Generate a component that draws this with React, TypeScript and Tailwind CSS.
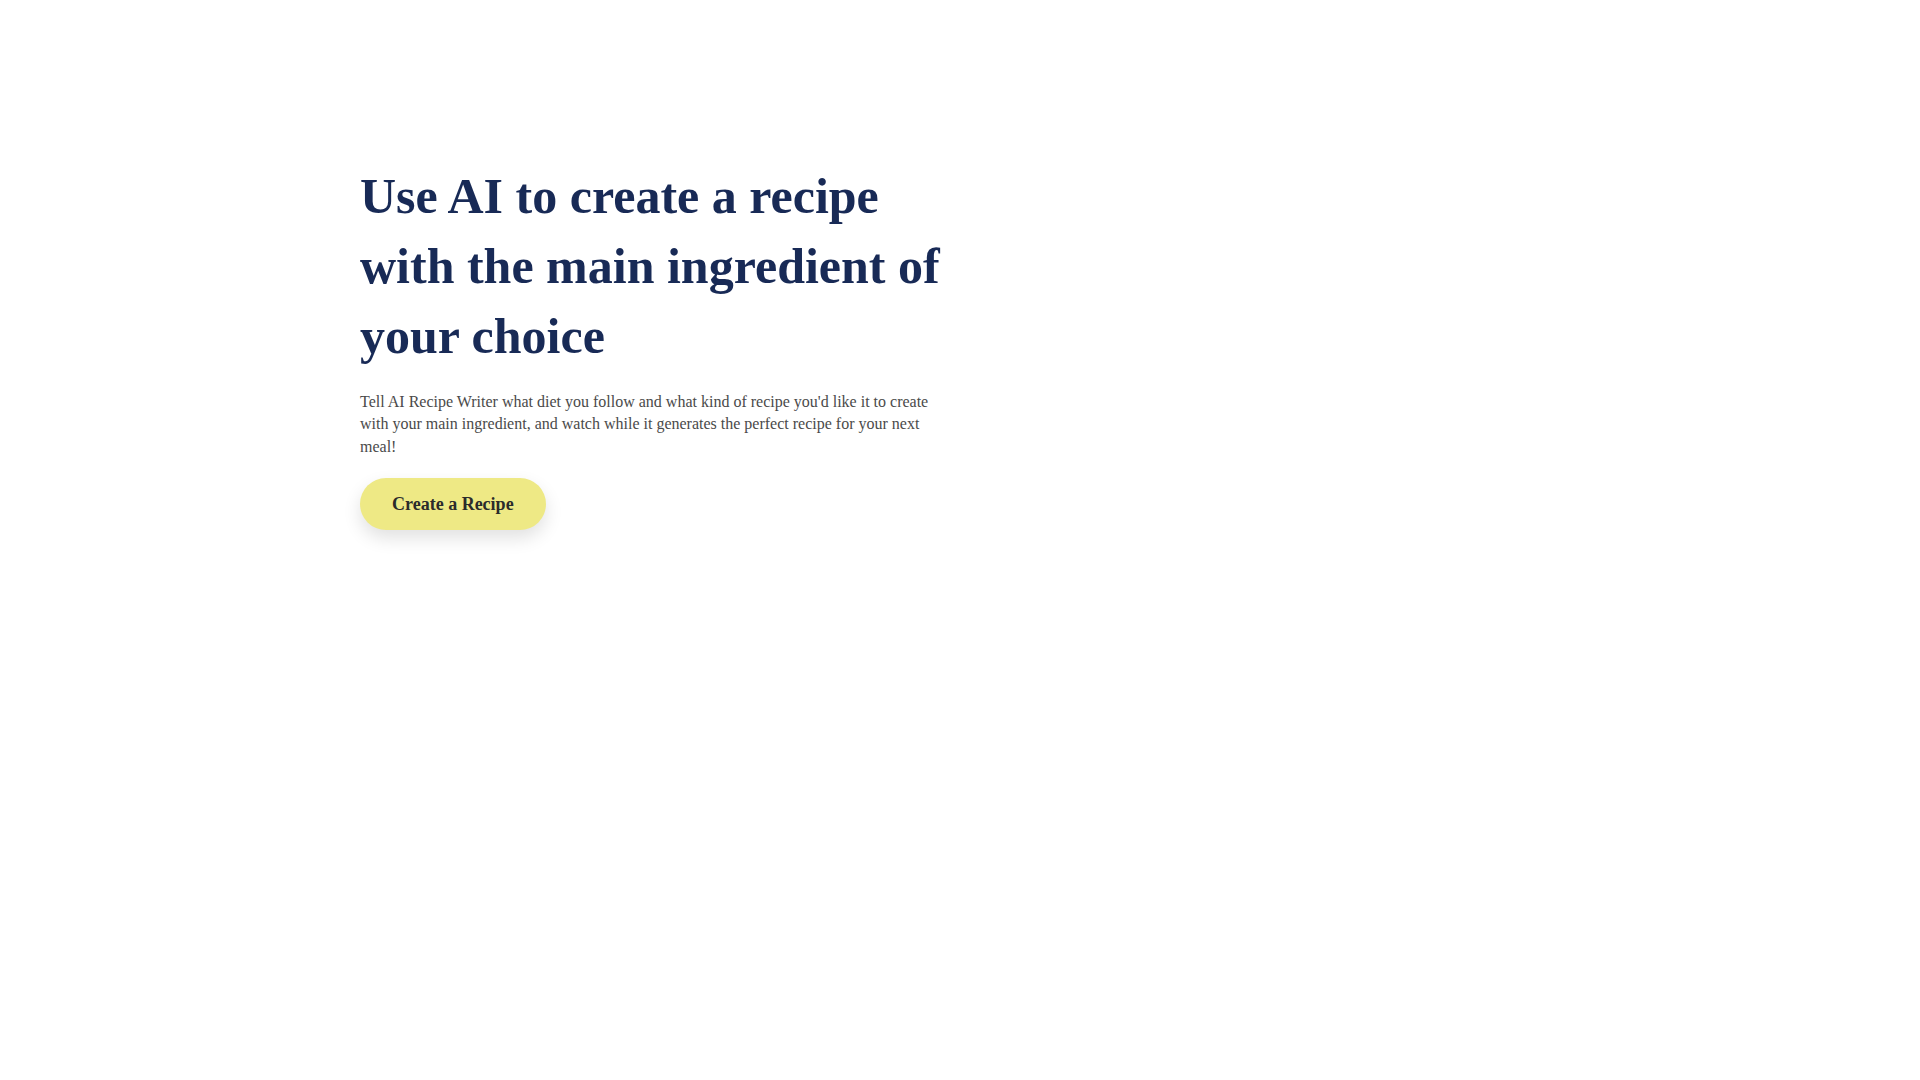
export default function App() {
    return (
        <div className="min-h-screen w-full bg-white" style={{ fontFamily: '"Liberation Serif", "Times New Roman", serif' }}>
            {/*HERO*/}
            <section className="mx-auto max-w-[1200px] pt-[161px] grid grid-cols-2 gap-8">
                <div className="flex flex-col">
                    <h1 className="text-[50px] leading-[70px] font-bold text-[#182a56]">
                        Use AI to create a recipe with the main ingredient of your choice
                    </h1>
                    <p className="mt-[20px] text-[16px] leading-[1.4] text-[#4a4a4a]">
                        Tell AI Recipe Writer what diet you follow and what kind of recipe you'd like it to create with your main ingredient, and watch while it generates the perfect recipe for your next meal!
                    </p>
                    <div className="mt-5">
                        <button className="h-[52px] px-8 rounded-full bg-[#eee985] text-[18px] font-bold text-[#2b2b2b] shadow-[0_8px_18px_rgba(0,0,0,0.12)]">
                            Create a Recipe
                        </button>
                    </div>
                </div>
                <div></div>
            </section>
        </div>
    )
}
